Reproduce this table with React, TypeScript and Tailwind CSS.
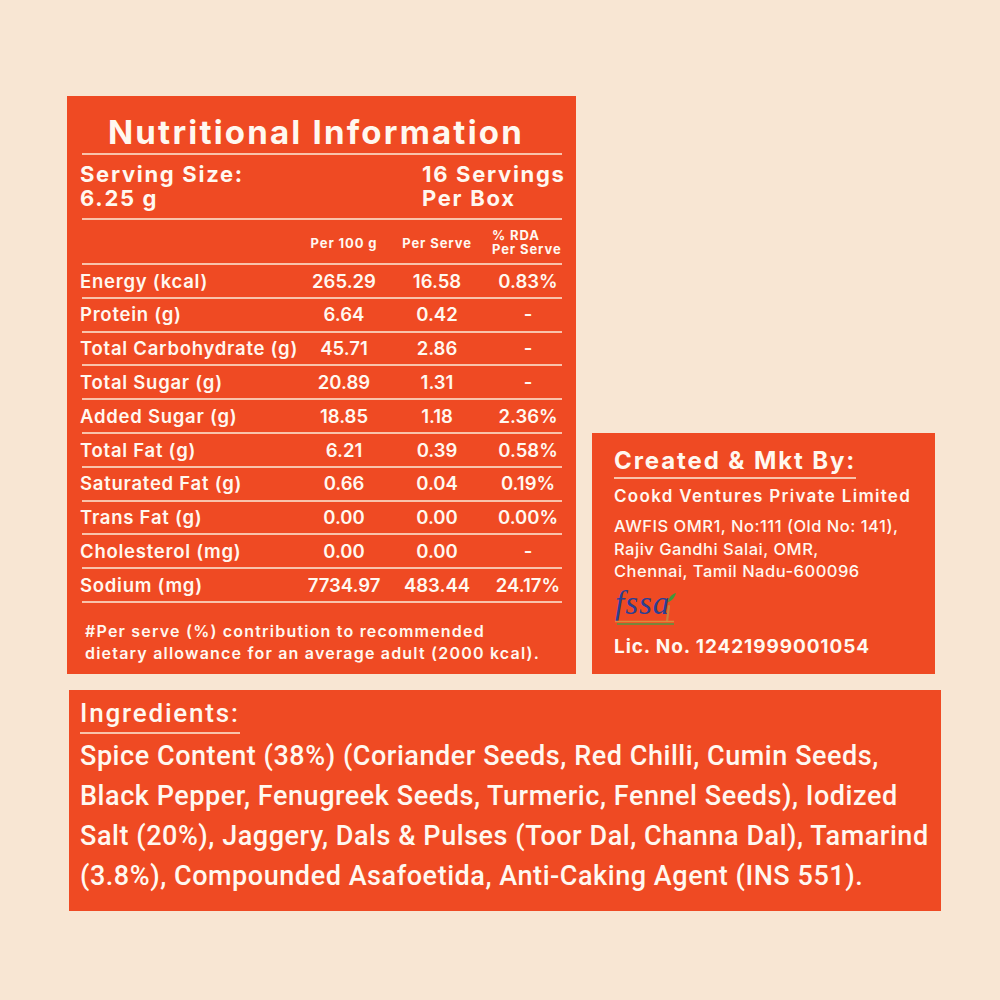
const rows = [
  { name: "Energy (kcal)", per100: "265.29", serve: "16.58", rda: "0.83%" },
  { name: "Protein (g)", per100: "6.64", serve: "0.42", rda: "-" },
  { name: "Total Carbohydrate (g)", per100: "45.71", serve: "2.86", rda: "-" },
  { name: "Total Sugar (g)", per100: "20.89", serve: "1.31", rda: "-" },
  { name: "Added Sugar (g)", per100: "18.85", serve: "1.18", rda: "2.36%" },
  { name: "Total Fat (g)", per100: "6.21", serve: "0.39", rda: "0.58%" },
  { name: "Saturated Fat (g)", per100: "0.66", serve: "0.04", rda: "0.19%" },
  { name: "Trans Fat (g)", per100: "0.00", serve: "0.00", rda: "0.00%" },
  { name: "Cholesterol (mg)", per100: "0.00", serve: "0.00", rda: "-" },
  { name: "Sodium (mg)", per100: "7734.97", serve: "483.44", rda: "24.17%" },
];

const Rule = () => <div className="h-[2px] w-[480px] ml-[2px] bg-[#f9c3ab]" />;

const FssaiLogo = () => (
  <div className="relative w-[62px] h-[34px]">
    <span className="absolute left-[1px] top-[-5px] text-[33px] italic leading-none tracking-[1px] text-[#2b3f93] [font-family:'Liberation_Serif',serif]">
      fssa
    </span>
    <svg className="absolute left-0 top-0" width="62" height="34" viewBox="0 0 62 34">
      {/* the "i" stem */}
      <path d="M55 14 L53 29" stroke="#c9823e" strokeWidth="2.2" fill="none" strokeLinecap="round" />
      {/* leaf */}
      <path d="M54 10 C55 5 58 2 62 1 C61 5 58 9 54 10 Z" fill="#3c9a3a" />
      <path d="M1 29.5 H60" stroke="#e08a3a" strokeWidth="1.3" />
      <path d="M3 32 H60" stroke="#4f9a45" strokeWidth="1.3" />
    </svg>
  </div>
);

export default function App() {
  return (
    <div className="w-[1000px] h-[1000px] bg-[#f8e6d3] pt-[96px] pl-[67px] text-[#fff8f0] [font-family:'Inter',sans-serif]">
      <div className="flex items-end gap-4">
        {/* Nutrition panel */}
        <section className="w-[509px] h-[578px] bg-[#ef4a23] pt-[20px] pl-[13px]">
          <h1 className="pl-[28px] text-[33px] font-bold leading-[33px] tracking-[2.2px] whitespace-nowrap">
            Nutritional Information
          </h1>
          <div className="mt-[4px]">
            <Rule />
          </div>
          <div className="flex mt-[7px] text-[22px] font-bold leading-[24px] tracking-[1.7px]">
            <div className="w-[342px]">
              <div>Serving Size:</div>
              <div>6.25 g</div>
            </div>
            <div>
              <div>16 Servings</div>
              <div>Per Box</div>
            </div>
          </div>
          <div className="mt-[8px]">
            <Rule />
          </div>
          <div className="grid grid-cols-[218px_92px_94px_88px] items-center h-[43px] text-[13px] font-bold leading-[14px] tracking-[0.9px] whitespace-nowrap">
            <div />
            <div className="text-center pt-[2px]">Per 100 g</div>
            <div className="text-center pt-[2px]">Per Serve</div>
            <div className="pl-[8px]">
              <div>% RDA</div>
              <div>Per Serve</div>
            </div>
          </div>
          <Rule />
          {rows.map((r) => (
            <div key={r.name}>
              <div className="grid grid-cols-[218px_92px_94px_88px] items-center h-[31.8px] text-[18.5px] font-semibold leading-none">
                <div className="whitespace-nowrap tracking-[0.75px]">{r.name}</div>
                <div className="text-center">{r.per100}</div>
                <div className="text-center">{r.serve}</div>
                <div className="text-center">{r.rda}</div>
              </div>
              <Rule />
            </div>
          ))}
          <p className="mt-[17px] pl-[5px] text-[16px] font-semibold leading-[22px] tracking-[1.2px] whitespace-nowrap">
            #Per serve (%) contribution to recommended
            <br />
            dietary allowance for an average adult (2000 kcal).
          </p>
        </section>

        {/* Manufacturer panel */}
        <section className="w-[343px] h-[241px] bg-[#ef4a23] pt-[14px] pl-[22px]">
          <div className="w-fit">
            <h2 className="text-[24px] font-bold leading-[28px] tracking-[1.9px] whitespace-nowrap">Created &amp; Mkt By:</h2>
            <div className="mt-[2px] h-[2px] bg-[#f9c3ab]" />
          </div>
          <div className="mt-[6px] text-[17px] font-semibold leading-[22px] tracking-[1.3px] whitespace-nowrap">
            Cookd Ventures Private Limited
          </div>
          <div className="mt-[8px] text-[16.5px] font-medium leading-[22.5px] tracking-[0.5px] whitespace-nowrap">
            AWFIS OMR1, No:111 (Old No: 141),
            <br />
            Rajiv Gandhi Salai, OMR,
            <br />
            Chennai, Tamil Nadu-600096
          </div>
          <div className="mt-[9px]">
            <FssaiLogo />
          </div>
          <div className="mt-[9px] text-[19px] font-bold leading-[24px] tracking-[0.9px] whitespace-nowrap">
            Lic. No. 12421999001054
          </div>
        </section>
      </div>

      {/* Ingredients panel */}
      <section className="ml-[2px] mt-[16px] w-[872px] h-[221px] bg-[#ef4a23] pt-[9px] pl-[11px] [font-family:'Roboto',sans-serif]">
        <div className="w-fit">
          <h3 className="text-[26px] font-medium leading-[28px] tracking-[1.8px]">Ingredients:</h3>
          <div className="mt-[5px] h-[2px] bg-[#f9c3ab]" />
        </div>
        <p className="mt-[2px] w-[860px] text-[27px] font-medium leading-[40px] tracking-[0.55px] whitespace-nowrap">
          Spice Content (38%) (Coriander Seeds, Red Chilli, Cumin Seeds,
          <br />
          Black Pepper, Fenugreek Seeds, Turmeric, Fennel Seeds), Iodized
          <br />
          Salt (20%), Jaggery, Dals &amp; Pulses (Toor Dal, Channa Dal), Tamarind
          <br />
          (3.8%), Compounded Asafoetida, Anti-Caking Agent (INS 551).
        </p>
      </section>
    </div>
  );
}
